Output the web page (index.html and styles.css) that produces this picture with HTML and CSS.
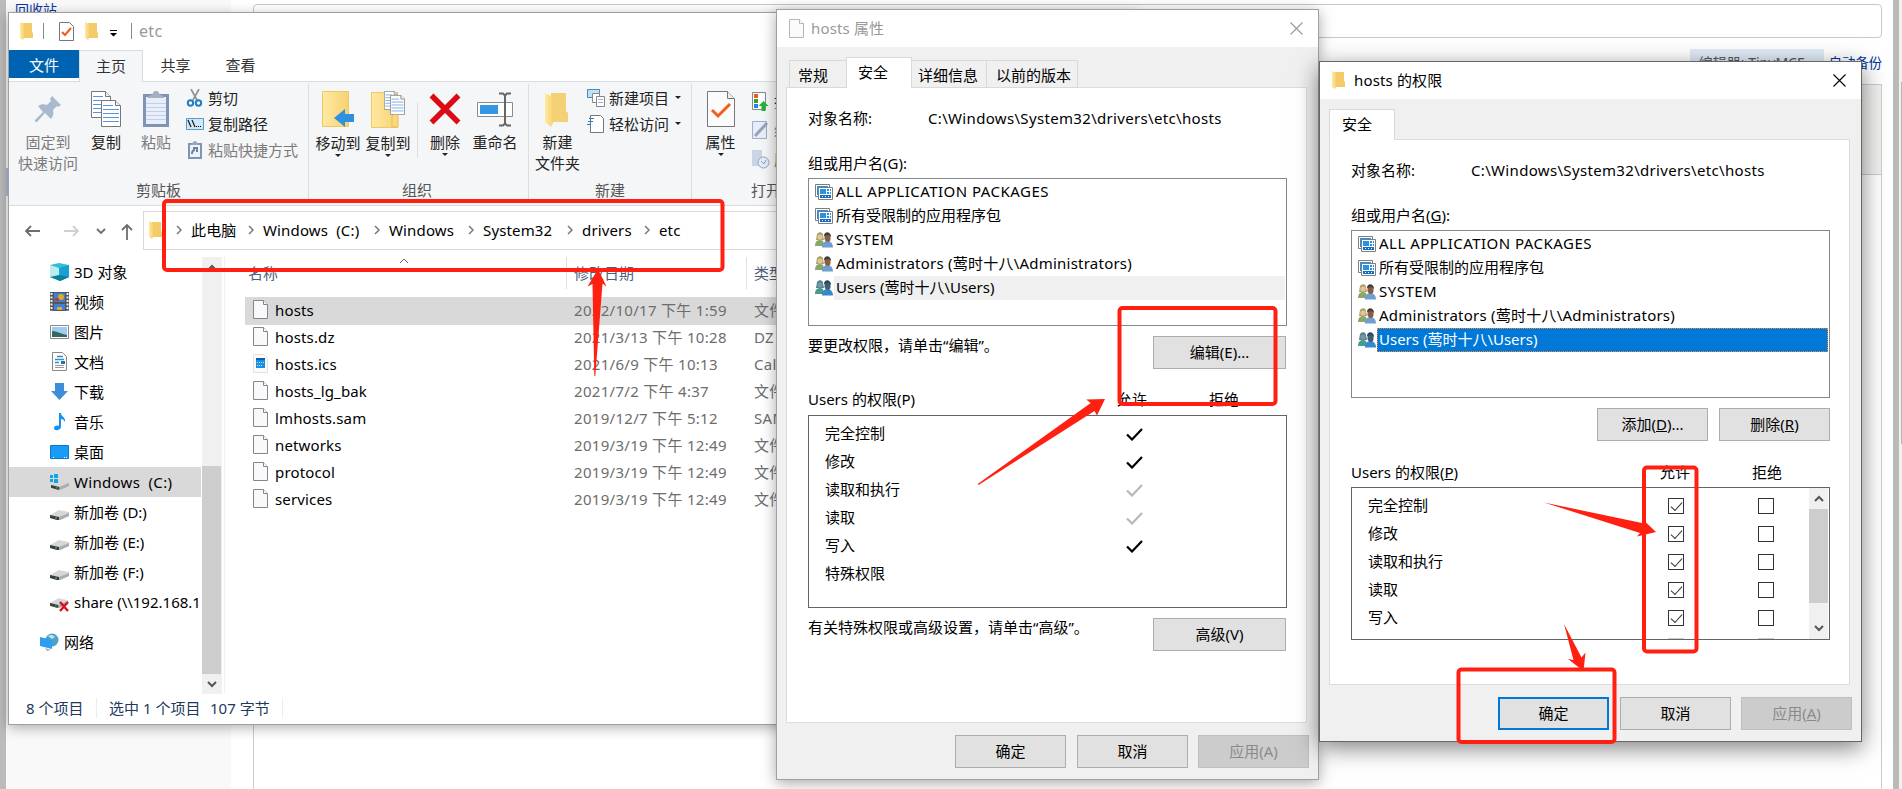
FILE: index.html
```html
<!DOCTYPE html>
<html lang="zh-CN">
<head>
    <meta charset="UTF-8">
    <meta name="viewport" content="width=device-width, initial-scale=1.0">
    <title>hosts 权限</title>
    <link rel="stylesheet" href="styles.css">
</head>
<body>
    <svg class="defs">
        <linearGradient id="gold" x1="0" x2="1"><stop offset="0" stop-color="#ffe9a2"/><stop offset="1" stop-color="#f7d272"/></linearGradient>
        <symbol id="folder" viewBox="0 0 13 18">
            <path d="M3 1h9v9l1 1v5H3z" fill="#f3cb68"/>
            <path d="M0 0l4 2v14l-1 2-3-2z" fill="url(#gold)"/>
        </symbol>
        <symbol id="file" viewBox="0 0 15 19">
            <path d="M.5.5h10l4 4v14H.5z" fill="#f8f9fa" stroke="#868686"/>
            <path d="M10.500.5v4h4" fill="#fff" stroke="#868686"/>
        </symbol>
        <symbol id="apps" viewBox="0 0 18 16">
            <path d="M.5.5h14v12H.5z" fill="#fff" stroke="#7b7f83"/>
            <path d="M2 2h11v9H2z" fill="#2d92dd"/>
            <path d="M3.500 3.500h14v12h-14z" fill="#fff" stroke="#7b7f83"/>
            <path d="M5 5h6v5H5zM12 5h2v2h-2zM15 5h1v2h-1zM12 8h2v2h-2zM15 8h1v2h-1z" fill="#2d92dd"/>
            <path d="M5 11h11v3H5z" fill="#0f6fc6"/>
            <path d="M7 12h1v1H7zM10 12h1v1h-1zM13 12h1v1h-1z" fill="#fff"/>
        </symbol>
        <symbol id="users" viewBox="0 0 18 16">
            <path d="M0 14c0-4 2-6 5-6s4 2 4 6z" fill="#87a866"/>
            <path d="M2 2c2-3 6-2 6 1l1 5H1z" fill="#aaa25e"/>
            <circle cx="5" cy="5" r="2.600" fill="#e3c3a3"/>
            <path d="M7 15.500c0-4 2-6.500 5.500-6.500s5.500 3 5.500 6.500z" fill="#6e9fd2"/>
            <path d="M9.500 3h6v4c0 4-5 4-6 0z" fill="#8b5d42"/>
            <path d="M9 4c0-5 7-5 7 1l-2-2z" fill="#453d38"/>
        </symbol>
        <symbol id="users-sel" viewBox="0 0 18 16">
            <path d="M0 14c0-4 2-6 5-6s4 2 4 6z" fill="#459c8c"/>
            <path d="M2 2c2-3 6-2 6 1l1 5H1z" fill="#567f87"/>
            <circle cx="5" cy="5" r="2.600" fill="#7498a8"/>
            <path d="M7 15.500c0-4 2-6.500 5.500-6.500s5.500 3 5.500 6.500z" fill="#3489cf"/>
            <path d="M9.500 3h6v4c0 4-5 4-6 0z" fill="#3f5d75"/>
            <path d="M9 4c0-5 7-5 7 1l-2-2z" fill="#25496a"/>
        </symbol>
        <symbol id="tick" viewBox="0 0 17 13">
            <path d="M1 6.500l5 5L16 1" fill="none" stroke="currentColor" stroke-width="2.200"/>
        </symbol>
        <symbol id="close" viewBox="0 0 13 13">
            <path d="M.5.5l12 12M12.500.5l-12 12" fill="none" stroke="currentColor" stroke-width="1.100"/>
        </symbol>
        <symbol id="drive" viewBox="0 0 19 10">
            <path d="M0 5L9 0l10 2v4l-9 4H7L0 8z" fill="#d6d7d9"/>
            <path d="M0 5l9 2v3H7L0 8z" fill="#3b3e3d"/>
            <path d="M9 7l10-4v3l-9 4H9z" fill="#aaacae"/>
            <path d="M5 7.500h2v1H5z" fill="#3ad04a"/>
        </symbol>
        <symbol id="chev" viewBox="0 0 6 10">
            <path d="M1 1l4 4-4 4" fill="none" stroke="#777" stroke-width="1.500"/>
        </symbol>
        <symbol id="arrow-up" viewBox="0 0 10 7">
            <path d="M1 6l4-4 4 4" fill="none" stroke="#555" stroke-width="2"/>
        </symbol>
        <symbol id="arrow-down" viewBox="0 0 10 7">
            <path d="M1 1l4 4 4-4" fill="none" stroke="#555" stroke-width="2"/>
        </symbol>
        <symbol id="doc" viewBox="0 0 20 27">
            <path d="M.5.5h14l5 5v21H.5z" fill="#fff" stroke="#777"/>
            <path d="M14.500.5v5h5" fill="#eee" stroke="#777"/>
            <path d="M2 5.500h10M2 9.500h16M2 13.500h16M2 17.500h16M2 21.500h16" stroke="#5a94dc"/>
        </symbol>
    </svg>

    <!-- 网页背景 -->
    <div class="page">
        <div class="side">
            <a class="recycle">回收站</a>
            <div class="side-mark"></div>
        </div>
        <div class="editor">
            <div class="title-input"></div>
            <div class="editor-links">
                <span class="editor-btn">编辑器: TinyMCE ▾</span>
                <a>自动备份</a>
            </div>
            <div class="editor-toolbar"></div>
            <div class="editor-body"></div>
        </div>
        <div class="page-edge"></div>
        <div class="page-scroll"><div></div></div>
    </div>

    <!-- 资源管理器 -->
    <div class="window explorer">
        <div class="ex-title">
            <svg width="13" height="18"><use href="#folder"/></svg>
            <i class="bar"></i>
            <svg class="qa-check" width="15" height="19" viewBox="0 0 15 19"><path d="M.5.5h10l4 4v14H.5z" fill="#fff" stroke="#777"/><path d="M3 10l3 3 6-7" fill="none" stroke="#f1601b" stroke-width="2.200"/></svg>
            <svg class="qa-folder" width="13" height="18"><use href="#folder"/></svg>
            <svg class="qa-more" width="7" height="7" viewBox="0 0 7 7"><path d="M0 0h7v1H0zM0 3h7L3.500 6.500z"/></svg>
            <i class="bar"></i>
            <span>etc</span>
        </div>
        <div class="ex-tabs">
            <div class="ex-file">文件</div>
            <div class="ex-home">主页</div>
            <div class="ex-tab">共享</div>
            <div class="ex-tab">查看</div>
        </div>
        <div class="ribbon">
            <div class="group g-clip">
                <div class="tools">
                    <div class="tool off w60">
                        <svg width="28" height="36" viewBox="0 0 28 36"><path d="M18 5l9 9-3 2-1-1-4 4c1 4 0 6-2 9l-6-6-8 9-2 0v-2l8-8-5-6c3-2 6-2 9-1l4-4-1-2z" fill="#a9b9ce"/></svg>
                        <span>固定到</span><span>快速访问</span>
                    </div>
                    <div class="tool w50 ml3">
                        <svg width="30" height="36" viewBox="0 0 30 36"><use href="#doc" width="20" height="27"/><use href="#doc" x="10" y="9" width="20" height="27"/></svg>
                        <span>复制</span>
                    </div>
                    <div class="tool off w50">
                        <svg width="26" height="36" viewBox="0 0 26 36"><path d="M0 3h26v33H0z" fill="#8193b5"/><path d="M3 6h20v27H3z" fill="#e8eefa"/><path d="M5 7c0-3 4-2 5-5 1-3 5-3 6 0 1 3 5 2 5 5z" fill="#a4afc0"/><path d="M3 12.500h20M3 16.500h20M3 20.500h20M3 24.500h20M3 28.500h20" stroke="#c4d0e8"/></svg>
                        <span>粘贴</span>
                    </div>
                    <div class="small-tools">
                        <div><svg width="18" height="18" viewBox="0 0 18 18"><path d="M5 0l6 11M13 0L7 11" stroke="#8f9296" stroke-width="1.700"/><circle cx="4.500" cy="14" r="2.700" fill="none" stroke="#1f7fc0" stroke-width="2"/><circle cx="12.500" cy="14" r="2.700" fill="none" stroke="#1f7fc0" stroke-width="2"/></svg>剪切</div>
                        <div><svg width="18" height="18" viewBox="0 0 18 18"><path d="M.5 3.500h17v11H.5z" fill="#cfe7f8" stroke="#5a9ac8"/><path d="M2 5l3 7M6 5l3 7" stroke="#222" stroke-width="1.300"/><path d="M10 11h1v1h-1zM12 11h1v1h-1zM14 11h1v1h-1z"/></svg>复制路径</div>
                        <div class="off"><svg width="18" height="19" viewBox="0 0 18 19"><path d="M2 3h14v16H2z" fill="#8193b5"/><path d="M4 5h10v12H4z" fill="#eef2fb"/><path d="M5 5c1-1 2-4 4-4s3 3 4 4z" fill="#99a6bb"/><path d="M6 14c0-3 1-4 3-4M7 8h4v4" fill="none" stroke="#6d7f9f" stroke-width="2"/></svg>粘贴快捷方式</div>
                    </div>
                </div>
                <div class="group-name">剪贴板</div>
            </div>
            <div class="group g-org">
                <div class="tools">
                    <div class="tool w50">
                        <svg width="32" height="37" viewBox="0 0 32 37"><path d="M.5.5h26v35H.5z" fill="url(#gold)" stroke="#edc964"/><path d="M32 23H23v-5l-11 9 11 9v-5h9z" fill="#2f90e0"/></svg>
                        <span>移动到</span><i class="caret"></i>
                    </div>
                    <div class="tool w50">
                        <svg width="34" height="37" viewBox="0 0 34 37"><path d="M.5 1.500h26v35H.5z" fill="url(#gold)" stroke="#edc964"/><use href="#doc" x="13" width="14" height="19"/><use href="#doc" x="19" y="4" width="15" height="20"/><path d="M21 36V25c2-2 5-2 6 0v11z" fill="#f8d880" stroke="#e8bd50"/></svg>
                        <span>复制到</span><i class="caret"></i>
                    </div>
                    <i class="divider"></i>
                    <div class="tool w50">
                        <svg width="32" height="36" viewBox="0 0 32 36"><path d="M2.500 4.500l27 27M29.500 4.500l-27 27" stroke="#dc0a14" stroke-width="5.500"/></svg>
                        <span>删除</span><i class="caret"></i>
                    </div>
                    <div class="tool w50">
                        <svg width="36" height="36" viewBox="0 0 36 36"><path d="M.5 11.500h35v14H.5z" fill="#fff" stroke="#8b8b8b"/><path d="M3 14h18v9H3z" fill="#3497e6"/><path d="M22 2.500h4l2 2 2-2h4M28 4v29M22 34.500h4l2-2 2 2h4" fill="none" stroke="#666" stroke-width="2"/></svg>
                        <span>重命名</span>
                    </div>
                </div>
                <div class="group-name">组织</div>
            </div>
            <div class="group g-new">
                <div class="tools">
                    <div class="tool w56">
                        <svg width="25" height="36" viewBox="0 0 25 36"><path d="M6 2h15v18l2 2v9H6z" fill="#f5d175"/><path d="M0 2l8 4v26l-2 4-6-5z" fill="url(#gold)"/></svg>
                        <span>新建</span><span>文件夹</span>
                    </div>
                    <div class="small-tools near">
                        <div><svg width="18" height="18" viewBox="0 0 18 18"><path d="M.5.5h12v8H.5z" fill="#bfe2f2" stroke="#4a8bb0"/><path d="M5.500 4.500h7v9h-7z" fill="#fff" stroke="#888"/><path d="M9.500 7.500h8v10h-8z" fill="#fff" stroke="#888"/><path d="M11 10.500h5M11 13.500h5" stroke="#8fb4e0"/></svg>新建项目<i class="caret"></i></div>
                        <div><svg width="18" height="18" viewBox="0 0 18 18"><path d="M3.500.5h10l3 3v14h-13z" fill="#fff" stroke="#777"/><path d="M2 3.500h5M1 6.500h5M0 9.500h4" stroke="#2a7ac4"/></svg>轻松访问<i class="caret"></i></div>
                    </div>
                </div>
                <div class="group-name">新建</div>
            </div>
            <div class="group g-open">
                <div class="tools">
                    <div class="tool w56">
                        <svg width="28" height="36" viewBox="0 0 28 36"><path d="M.5.5h20l7 7v28H.5z" fill="#fbfbfb" stroke="#777"/><path d="M20.500.5v7h7" fill="#eee" stroke="#777"/><path d="M5 19l6 6 12-12" fill="none" stroke="#f1601b" stroke-width="3"/></svg>
                        <span>属性</span><i class="caret"></i>
                    </div>
                    <div class="small-tools spaced">
                        <div><svg width="18" height="19" viewBox="0 0 18 19"><path d="M.5.5h13v17H.5z" fill="#fff" stroke="#888"/><path d="M2 2h4v4H2z" fill="#f05a1a"/><path d="M2 7h4v4H2z" fill="#2ba52b"/><path d="M2 12h4v4H2z" fill="#2d80dd"/><path d="M11.500 9l5 5h-3v5h-4v-5h-3z" fill="#1fb53a"/></svg>打开</div>
                        <div class="off"><svg width="18" height="19" viewBox="0 0 18 19"><path d="M.5.500h14v17H.5z" fill="#e8eef8" stroke="#a0aec6"/><path d="M3 15L15 2" stroke="#93a3c0" stroke-width="3"/></svg>编辑</div>
                        <div class="off"><svg width="18" height="19" viewBox="0 0 18 19"><path d="M0 0h10v16H0z" fill="#c9d5e7"/><circle cx="11.500" cy="12.500" r="5.500" fill="#e5ecf6" stroke="#93a3c0"/><path d="M9 11l3 3 2-4" fill="none" stroke="#93a3c0"/></svg>历史</div>
                    </div>
                </div>
                <div class="group-name">打开</div>
            </div>
        </div>
        <div class="address-row">
            <svg class="nav-icons" width="120" height="20" viewBox="0 0 120 20" fill="none" stroke="#6e6e6e" stroke-width="1.800">
                <path d="M17 10H3M8 5l-5 5 5 5"/>
                <path d="M41 10h14M50 5l5 5-5 5" stroke="#d0d0d0"/>
                <path d="M74 8l4 4 4-4"/>
                <path d="M104 19V4M99 9l5-5 5 5"/>
            </svg>
            <div class="address">
                <svg width="13" height="18"><use href="#folder"/></svg>
                <svg class="c1" width="6" height="10"><use href="#chev"/></svg><span class="w-pc">此电脑</span>
                <svg width="6" height="10"><use href="#chev"/></svg><span class="w-c">Windows&nbsp; (C:)</span>
                <svg width="6" height="10"><use href="#chev"/></svg><span class="w-win">Windows</span>
                <svg width="6" height="10"><use href="#chev"/></svg><span class="w-sys">System32</span>
                <svg width="6" height="10"><use href="#chev"/></svg><span class="w-drv">drivers</span>
                <svg width="6" height="10"><use href="#chev"/></svg><span>etc</span>
            </div>
        </div>
        <div class="ex-main">
            <div class="tree">
                <div><svg width="19" height="18" viewBox="0 0 19 18"><path d="M0 2l9-2 10 2v12l-9 4-10-4z" fill="#36bcd8"/><path d="M0 2l9 3v9l-9 0z" fill="#b9ecf0"/><path d="M9 5l10-3v12l-9 4z" fill="#16a0d4"/><path d="M0 14l9-2 10 2-9 4z" fill="#0c7f9c"/></svg>3D 对象</div>
                <div><svg width="19" height="19" viewBox="0 0 19 19"><path d="M0 0h19v19H0z" fill="#555"/><path d="M4 1h11v9H4zM4 12h11v6H4z" fill="#3c7fe0"/><path d="M1.500 1v18M17.500 1v18" stroke="#eee" stroke-width="2" stroke-dasharray="2 1.500"/><circle cx="11" cy="5" r="3" fill="#d8b020"/><path d="M5 6h4v3H5z" fill="#c0392b"/><path d="M7 15h5v3H7z" fill="#d8b020"/></svg>视频</div>
                <div><svg width="19" height="14" viewBox="0 0 19 14"><path d="M.5.5h18v13H.5z" fill="#fff" stroke="#888"/><path d="M2 2h15v10H2z" fill="#9dcdf2"/><path d="M2 6c5 0 9 3 15 4v2H2z" fill="#35685a"/></svg>图片</div>
                <div><svg width="19" height="19" viewBox="0 0 19 19"><path d="M2.500.5h10l4 4v14h-14z" fill="#fff" stroke="#888"/><path d="M7 4.500h6M5 7.500h9M5 10.500h4" stroke="#2e8fd0" stroke-width="1.300"/><path d="M11 9h4v3h-4z" fill="#2e6da0"/><path d="M5 13.500h9M5 15.500h9" stroke="#999"/></svg>文档</div>
                <div><svg width="19" height="18" viewBox="0 0 19 18"><path d="M5 0h9v8h4l-8.500 9L1 8h4z" fill="#3c8edb"/></svg>下载</div>
                <div><svg width="19" height="18" viewBox="0 0 19 18"><path d="M9 0h2c0 4 5 4 4 9-1-2-2-3-4-3v8c0 3-7 5-7 1 0-2 3-3 5-2z" fill="#1193f0"/></svg>音乐</div>
                <div><svg width="19" height="14" viewBox="0 0 19 14"><path d="M.5.5h18v13H.5z" fill="#1a9bf7" stroke="#0b79c9"/><path d="M3 12.500h1M14 12.500h1M16 12.500h1" stroke="#fff"/></svg>桌面</div>
                <div class="selected"><svg width="19" height="16" viewBox="0 0 19 16"><use href="#drive" x="1" y="6" width="18" height="10"/><path d="M0 1h3v3H0zM4 0h4v4H4zM0 5h3v3H0zM4 5h4v4H4z" fill="#0aa8e8"/></svg>Windows&nbsp; (C:)</div>
                <div><svg class="drv" width="19" height="10"><use href="#drive"/></svg>新加卷 (D:)</div>
                <div><svg class="drv" width="19" height="10"><use href="#drive"/></svg>新加卷 (E:)</div>
                <div><svg class="drv" width="19" height="10"><use href="#drive"/></svg>新加卷 (F:)</div>
                <div><svg class="drv" width="19" height="14" viewBox="0 0 19 14"><use href="#drive" width="18" height="10"/><path d="M10 4l8 9M18 4l-8 9" stroke="#d8101c" stroke-width="2.400"/></svg>share (\\192.168.1</div>
                <div class="network"><svg width="19" height="18" viewBox="0 0 19 18"><circle cx="12" cy="7" r="6.500" fill="#4fa0c8"/><path d="M8 3c3-2 5-1 7 1l-3 2z" fill="#bfe3f0"/><path d="M0 4l12 3v9L0 13z" fill="#2d9df0"/><path d="M5 15l6 2-4 1z" fill="#aaa"/></svg>网络</div>
            </div>
            <div class="scroll tree-scroll">
                <svg width="10" height="7"><use href="#arrow-up"/></svg>
                <div class="thumb"></div>
                <svg width="10" height="7"><use href="#arrow-down"/></svg>
            </div>
            <div class="files">
                <svg class="sort" width="10" height="6" viewBox="0 0 10 6"><path d="M1 5l4-4 4 4" fill="none" stroke="#666"/></svg>
                <div class="file-head"><span>名称</span><span>修改日期</span><span>类型</span></div>
                <div class="file selected"><svg width="15" height="19"><use href="#file"/></svg><span>hosts</span><span>2022/10/17 下午 1:59</span><span>文件</span></div>
                <div class="file"><svg width="15" height="19"><use href="#file"/></svg><span>hosts.dz</span><span>2021/3/13 下午 10:28</span><span>DZ 文件</span></div>
                <div class="file"><svg width="15" height="19" viewBox="0 0 15 19"><path d="M.5.5h10l4 4v14H.5z" fill="#fafafa" stroke="#e2e2e2"/><path d="M3 4h9v10H3z" fill="#1b8fe0"/><path d="M3 4h9v2H3z" fill="#0b62a8"/><path d="M4 8.500h7M4 11.500h5" stroke="#bfe0fa" stroke-dasharray="1 1"/></svg><span>hosts.ics</span><span>2021/6/9 下午 10:13</span><span>Calendar</span></div>
                <div class="file"><svg width="15" height="19"><use href="#file"/></svg><span>hosts_lg_bak</span><span>2021/7/2 下午 4:37</span><span>文件</span></div>
                <div class="file"><svg width="15" height="19"><use href="#file"/></svg><span>lmhosts.sam</span><span>2019/12/7 下午 5:12</span><span>SAM 文件</span></div>
                <div class="file"><svg width="15" height="19"><use href="#file"/></svg><span>networks</span><span>2019/3/19 下午 12:49</span><span>文件</span></div>
                <div class="file"><svg width="15" height="19"><use href="#file"/></svg><span>protocol</span><span>2019/3/19 下午 12:49</span><span>文件</span></div>
                <div class="file"><svg width="15" height="19"><use href="#file"/></svg><span>services</span><span>2019/3/19 下午 12:49</span><span>文件</span></div>
            </div>
        </div>
        <div class="status">
            <span class="st1">8 个项目</span>
            <span class="st2">选中 1 个项目</span>
            <span class="st3">107 字节</span>
        </div>
    </div>

    <!-- hosts 属性 -->
    <div class="window dialog props">
        <div class="dlg-title"><svg width="15" height="19"><use href="#file"/></svg><span>hosts 属性</span><svg class="x" width="13" height="13"><use href="#close"/></svg></div>
        <div class="dlg-tabs">
            <div class="dtab t1">常规</div>
            <div class="dtab on">安全</div>
            <div class="dtab t3">详细信息</div>
            <div class="dtab t4">以前的版本</div>
        </div>
        <div class="panel">
            <div class="object"><span>对象名称:</span><span>C:\Windows\System32\drivers\etc\hosts</span></div>
            <div class="label">组或用户名(G):</div>
            <div class="listbox">
                <div class="li caps"><svg width="18" height="16"><use href="#apps"/></svg><span>ALL APPLICATION PACKAGES</span></div>
                <div class="li"><svg width="18" height="16"><use href="#apps"/></svg><span>所有受限制的应用程序包</span></div>
                <div class="li caps"><svg width="18" height="16"><use href="#users"/></svg><span>SYSTEM</span></div>
                <div class="li latin"><svg width="18" height="16"><use href="#users"/></svg><span>Administrators (莺时十八\Administrators)</span></div>
                <div class="li gray"><svg width="18" height="16"><use href="#users-sel"/></svg><span>Users (莺时十八\Users)</span></div>
            </div>
            <div class="hint"><span>要更改权限，请单击<q>编辑</q>。</span><button class="btn wide">编辑(E)...</button></div>
            <div class="perm-head"><span>Users 的权限(P)</span><span>允许</span><span>拒绝</span></div>
            <div class="perms">
                <div><span>完全控制</span><svg width="17" height="13"><use href="#tick"/></svg></div>
                <div><span>修改</span><svg width="17" height="13"><use href="#tick"/></svg></div>
                <div><span>读取和执行</span><svg class="dim" width="17" height="13"><use href="#tick"/></svg></div>
                <div><span>读取</span><svg class="dim" width="17" height="13"><use href="#tick"/></svg></div>
                <div><span>写入</span><svg width="17" height="13"><use href="#tick"/></svg></div>
                <div><span>特殊权限</span></div>
            </div>
            <div class="hint"><span>有关特殊权限或高级设置，请单击<q>高级</q>。</span><button class="btn wide">高级(V)</button></div>
        </div>
        <div class="dlg-foot">
            <button class="btn">确定</button>
            <button class="btn">取消</button>
            <button class="btn disabled">应用(A)</button>
        </div>
    </div>

    <!-- hosts 的权限 -->
    <div class="window dialog rights">
        <div class="dlg-title"><svg width="13" height="18"><use href="#folder"/></svg><span>hosts 的权限</span><svg class="x" width="13" height="13"><use href="#close"/></svg></div>
        <div class="dlg-tabs">
            <div class="dtab on">安全</div>
        </div>
        <div class="panel">
            <div class="object"><span>对象名称:</span><span>C:\Windows\System32\drivers\etc\hosts</span></div>
            <div class="label">组或用户名(<u>G</u>):</div>
            <div class="listbox">
                <div class="li caps"><svg width="18" height="16"><use href="#apps"/></svg><span>ALL APPLICATION PACKAGES</span></div>
                <div class="li"><svg width="18" height="16"><use href="#apps"/></svg><span>所有受限制的应用程序包</span></div>
                <div class="li caps"><svg width="18" height="16"><use href="#users"/></svg><span>SYSTEM</span></div>
                <div class="li latin"><svg width="18" height="16"><use href="#users"/></svg><span>Administrators (莺时十八\Administrators)</span></div>
                <div class="li blue"><svg width="18" height="16"><use href="#users-sel"/></svg><span>Users (莺时十八\Users)</span></div>
            </div>
            <div class="list-btns"><button class="btn">添加(<u>D</u>)...</button><button class="btn">删除(<u>R</u>)</button></div>
            <div class="perm-head"><span>Users 的权限(<u>P</u>)</span><span>允许</span><span>拒绝</span></div>
            <div class="perm-box">
                <div class="checks">
                    <div><span>完全控制</span><i class="cb on"></i><i class="cb"></i></div>
                    <div><span>修改</span><i class="cb on"></i><i class="cb"></i></div>
                    <div><span>读取和执行</span><i class="cb on"></i><i class="cb"></i></div>
                    <div><span>读取</span><i class="cb on"></i><i class="cb"></i></div>
                    <div><span>写入</span><i class="cb on"></i><i class="cb"></i></div>
                    <div><span></span><i class="cb dim"></i><i class="cb dim"></i></div>
                </div>
                <div class="scroll">
                    <svg width="10" height="7"><use href="#arrow-up"/></svg>
                    <div class="thumb"></div>
                    <svg width="10" height="7"><use href="#arrow-down"/></svg>
                </div>
            </div>
        </div>
        <div class="dlg-foot">
            <button class="btn primary">确定</button>
            <button class="btn">取消</button>
            <button class="btn disabled">应用(<u>A</u>)</button>
        </div>
    </div>

    <!-- 红色标注 -->
    <svg class="marks" width="1902" height="789" viewBox="0 0 1902 789">
        <g fill="none" stroke="#ff2012" stroke-width="4">
            <rect x="164" y="201" width="558.500" height="69" rx="3"/>
            <rect x="1119.500" y="308" width="156" height="96" rx="3"/>
            <rect x="1644" y="467.500" width="52.500" height="184" rx="3"/>
            <rect x="1458.500" y="669.500" width="156" height="72.500" rx="3"/>
        </g>
        <g fill="#ff2012">
            <path d="M598 269l8.500 17.500-4-3-7.200 92.500h-1l-1.800-92-5 2.500z"/>
            <path d="M1105 399l-8 16.500-2.500-4.500-116 74-.8-1 113-81-4.500-3.500z"/>
            <path d="M1544 502.500l98 20.500.3-4 13.700 13-19 4.500 3-3.500z"/>
            <path d="M1564 624l17.500 33.500 4-5-2 18.500-15.500-12 5.500 1z"/>
        </g>
    </svg>
</body>
</html>
```
FILE: styles.css
```css
* {
    box-sizing: border-box;
}
body {
    margin: 0;
    height: 789px;
    overflow: hidden;
    position: relative;
    background: #fff;
    font: 15px/20px "Noto Sans", "Noto Sans CJK SC", sans-serif;
    color: #000;
}
svg {
    display: block;
    flex: none;
}
.defs {
    position: absolute;
    width: 0;
    height: 0;
}

/* 网页背景 */
.page {
    display: flex;
    height: 789px;
    border-left: 6px solid #bbb;
}
.side {
    width: 225px;
    background: #f9f9f9;
}
.recycle {
    display: block;
    padding-left: 9px;
    font-size: 14px;
    color: #0b35a0;
}
.side-mark {
    width: 3px;
    height: 28px;
    margin-top: 148px;
    background: #a9bbdc;
}
.editor {
    display: flex;
    flex-direction: column;
    width: 1629px;
    margin: 4px 11px 0 22px;
}
.title-input {
    height: 34px;
    border: 1px solid #c8c8c8;
    border-radius: 4px;
}
.editor-links {
    display: flex;
    justify-content: flex-end;
    height: 46px;
    padding-top: 11px;
    font-size: 13.3px;
    color: #003399;
    white-space: nowrap;
}
.editor-links a {
    margin: 4px 0 0 5px;
}
.editor-btn {
    width: 134px;
    height: 30px;
    padding: 4px 0 0 9px;
    background: #e0ebf7;
    font-size: 14px;
    color: #555;
}
.editor-toolbar {
    height: 91px;
    background: #f0f0ee;
    border: 1px solid #ccc;
}
.editor-body {
    flex: 1;
    border: 1px solid #ccc;
    border-width: 0 1px;
}
.page-edge {
    width: 6px;
    background: #bababa;
}
.page-scroll {
    width: 3px;
    padding: 82px 0 0 2px;
    background: #f1f1f1;
}
.page-scroll div {
    height: 362px;
    background: #b8b8b8;
}

.window {
    position: absolute;
    display: flex;
    flex-direction: column;
    background: #fff;
    border: 1px solid #a0a0a0;
}

/* 资源管理器 */
.explorer {
    left: 8px;
    top: 12px;
    width: 1130px;
    height: 713px;
    box-shadow: 0 3px 12px rgba(0, 0, 0, .3);
}
.ex-title {
    display: flex;
    align-items: center;
    height: 37px;
    padding-left: 11px;
    font-size: 16px;
    letter-spacing: .3px;
    color: #999;
}
.ex-title .bar {
    width: 1px;
    height: 16px;
    margin-left: 10px;
    background: #888;
}
.ex-title .qa-check {
    margin-left: 15px;
}
.ex-title .qa-folder {
    margin-left: 11px;
}
.ex-title .qa-more {
    margin: 4px 6px 0 12px;
}
.ex-title span {
    margin-left: 7px;
}
.ex-title .qa-more + .bar {
    margin-left: 8px;
}
.ex-tabs {
    display: flex;
    height: 32px;
    border-bottom: 1px solid #dadbdc;
    text-align: center;
    line-height: 30px;
    color: #333;
}
.ex-file {
    width: 70px;
    height: 28px;
    background: #0063b1;
    color: #fff;
}
.ex-home {
    width: 64px;
    height: 32px;
    background: #f5f6f7;
    border: 1px solid #dadbdc;
    border-bottom: 0;
}
.ex-tab {
    width: 65px;
}
.ribbon {
    display: flex;
    height: 124px;
    background: #f5f6f7;
    border-bottom: 1px solid #dadbdc;
    color: #222;
    white-space: nowrap;
}
.group {
    display: flex;
    flex: none;
    flex-direction: column;
    height: 116px;
    margin-top: 2px;
    border-right: 1px solid #dcdddf;
}
.g-clip { width: 300px; padding-left: 9px; }
.g-org { width: 220px; padding-left: 4px; }
.g-new { width: 163px; }
.g-open { width: 160px; }
.tools {
    display: flex;
    height: 100px;
    padding-top: 7px;
}
.tool {
    display: flex;
    flex: none;
    flex-direction: column;
    align-items: center;
    line-height: 21px;
}
.tool svg {
    margin-bottom: 5px;
}
.off {
    color: #7b7b7b;
}
.w60 { width: 60px; }
.w50 { width: 50px; }
.w56 { width: 57px; }
.ml3 { margin-left: 3px; }
.caret {
    border: 3px solid transparent;
    border-top-color: #222;
    border-bottom: 0;
}
.divider {
    width: 1px;
    height: 55px;
    margin: 12px 2px 0 4px;
    background: #dcdddf;
}
.small-tools {
    margin: -6px 0 0 5px;
}
.small-tools.near {
    margin-left: 1px;
}
.small-tools div {
    display: flex;
    align-items: center;
    gap: 4px;
    height: 26px;
}
.small-tools .caret {
    margin-left: 2px;
}
.small-tools.spaced {
    margin: -4px 0 0 3px;
}
.small-tools.spaced div {
    height: 29px;
}
.group-name {
    text-align: center;
    color: #555;
}
.g-clip .group-name {
    margin-left: -9px;
}
.g-org .group-name {
    margin-left: -7px;
}
.g-open .group-name {
    padding-left: 59px;
    text-align: left;
}
.address-row {
    display: flex;
    height: 51px;
    padding-top: 5px;
}
.nav-icons {
    margin: 10px 0 0 14px;
}
.address {
    display: flex;
    align-items: center;
    flex: 1;
    height: 39px;
    padding-left: 5px;
    border: 1px solid #d9d9d9;
    white-space: nowrap;
}
.address span {
    margin: -1px 0 0 9px;
    letter-spacing: .15px;
}
.address .c1 {
    margin-left: 14px;
}
.w-pc { width: 57px; }
.w-c { width: 111px; }
.w-win { width: 79px; }
.w-sys { width: 84px; }
.w-drv { width: 62px; }
.ex-main {
    display: flex;
    height: 438px;
}
.tree {
    width: 192px;
    overflow: hidden;
    white-space: nowrap;
}
.tree div {
    display: flex;
    align-items: center;
    gap: 5px;
    height: 30px;
    padding-left: 41px;
}
.tree .selected {
    background: #d9d9d9;
    letter-spacing: .3px;
}
.tree .drv {
    margin-top: 6px;
}
.tree .network {
    margin-top: 10px;
    padding-left: 31px;
}
.scroll {
    display: flex;
    flex-direction: column;
    align-items: center;
    background: #f0f0f0;
}
.thumb {
    width: 100%;
    background: #cdcdcd;
}
.tree-scroll {
    width: 20px;
    margin-left: 1px;
    padding-top: 7px;
}
.tree-scroll .thumb {
    width: 19px;
    height: 208px;
    margin: 195px 1px 7px 0;
}
.files {
    flex: 1;
    margin-left: 2px;
    padding-left: 20px;
    border-left: 1px solid #f0f0f0;
}
.sort {
    margin: 0 0 -6px 154px;
    position: relative;
    top: 1px;
}
.file-head {
    display: flex;
    height: 32px;
    margin-bottom: 8px;
    line-height: 32px;
    color: #4c607a;
}
.file-head span {
    width: 180px;
    padding-left: 7px;
    border-left: 1px solid #e0e0e0;
}
.file-head span:first-child {
    width: 321px;
    padding-left: 3px;
    border: 0;
}
.file {
    display: flex;
    align-items: center;
    height: 27px;
    padding: 0 0 2px 8px;
    letter-spacing: .3px;
    color: #6d6d6d;
}
.file.selected {
    height: 28px;
    background: #d9d9d9;
}
.file svg {
    margin-top: -1px;
}
.file span {
    width: 180px;
}
.file span:nth-of-type(1) {
    width: 299px;
    margin-left: 7px;
    letter-spacing: .15px;
    color: #000;
}
.status {
    display: flex;
    align-items: center;
    height: 30px;
    padding: 0 0 2px 17px;
    color: #1e395b;
}
.st1 {
    width: 71px;
    border-right: 1px solid #eee;
}
.st2 {
    width: 101px;
    margin-left: 12px;
}
.st3 {
    width: 73px;
    border-right: 1px solid #eee;
}

/* 对话框 */
.dialog {
    width: 543px;
    background: #f0f0f0;
}
.props {
    left: 776px;
    top: 9px;
    height: 771px;
    box-shadow: 0 3px 14px rgba(0, 0, 0, .35);
}
.rights {
    left: 1319px;
    top: 61px;
    height: 681px;
    border-color: #666;
    box-shadow: 0 6px 22px rgba(0, 0, 0, .5);
}
.dlg-title {
    display: flex;
    align-items: center;
    height: 37px;
    padding: 0 15px 1px 12px;
    background: #fff;
}
.dlg-title span {
    flex: 1;
    margin: -1px 0 0 7px;
    letter-spacing: .15px;
}
.props .dlg-title {
    color: #999;
}
.props .dlg-title svg:first-child {
    opacity: .6;
}
.rights .dlg-title span {
    margin-left: 9px;
}
.dlg-tabs {
    display: flex;
    align-items: flex-end;
    height: 41px;
    margin: 0 0 -1px 9px;
    position: relative;
}
.props .dlg-tabs {
    padding-left: 3px;
}
.dtab {
    height: 28px;
    padding-left: 8px;
    line-height: 29px;
    border: 1px solid #d9d9d9;
}
.dtab.on {
    width: 66px;
    height: 31px;
    padding-left: 11px;
    background: #fff;
    border-bottom: 0;
}
.rights .dtab.on {
    padding-left: 12px;
}
.t1 { width: 57px; border-right: 0; }
.t3 { width: 75px; border-left: 0; padding-left: 6px; }
.t4 { width: 91px; border-left: 0; padding-left: 9px; }
.panel {
    width: 521px;
    height: 636px;
    margin-left: 9px;
    padding: 20px 20px 0 21px;
    background: #fff;
    border: 1px solid #dcdcdc;
}
.rights .panel {
    height: 546px;
}
.object {
    display: flex;
}
.object span:first-child {
    width: 120px;
}
.object span:last-child {
    letter-spacing: .33px;
}
.label {
    margin: 25px 0 5px;
}
.listbox {
    width: 479px;
    height: 148px;
    padding: 1px;
    border: 1px solid #828790;
}
.rights .listbox {
    height: 168px;
}
.li {
    display: flex;
    align-items: center;
    height: 24px;
    padding-left: 5px;
}
.li svg {
    margin: -1px 1px 0 0;
}
.li span {
    flex: 1;
    height: 24px;
    padding-left: 2px;
    line-height: 22px;
}
.caps {
    letter-spacing: .48px;
}
.latin {
    letter-spacing: .23px;
}
.li.gray span {
    background: #f0f0f0;
}
.li.blue span {
    padding-left: 1px;
    line-height: 20px;
    background: #0078d7;
    border: 1px dotted #ff8728;
    color: #fff;
}
.hint {
    display: flex;
    justify-content: space-between;
    align-items: flex-start;
    width: 478px;
    padding-top: 10px;
}
.hint span {
    margin-top: -1px;
}
q {
    quotes: "“" "”";
}
.btn {
    width: 111px;
    height: 33px;
    padding: 0 0 2px;
    background: #e1e1e1;
    border: 1px solid #adadad;
    font: inherit;
    color: #000;
}
.btn.wide {
    width: 133px;
}
.btn.primary {
    border: 2px solid #0078d7;
}
.btn.disabled {
    background: #ccc;
    border-color: #bfbfbf;
    color: #8a8a8a;
}
.perm-head {
    display: flex;
    margin: 20px 0 6px;
}
.perm-head span:nth-child(1) { width: 309px; }
.perm-head span:nth-child(2) { width: 92px; }
.perms {
    width: 479px;
    height: 193px;
    padding: 4px 0 0 16px;
    border: 1px solid #646464;
}
.perms div {
    display: flex;
    align-items: center;
    height: 28px;
}
.perms span {
    width: 301px;
    margin-top: -2px;
}
.dim {
    color: #b8b8b8;
}
.dlg-foot {
    display: flex;
    justify-content: flex-end;
    gap: 11px;
    padding: 12px 9px 0 0;
}
.dlg-foot .disabled {
    margin-left: -1px;
}
.list-btns {
    display: flex;
    justify-content: flex-end;
    gap: 11px;
    width: 479px;
    padding-top: 10px;
}
.rights .perm-head {
    margin: 21px 0 5px;
}
.perm-box {
    display: flex;
    width: 479px;
    height: 153px;
    border: 1px solid #646464;
}
.checks {
    flex: 1;
    height: 151px;
    padding: 4px 0 0 16px;
    overflow: hidden;
}
.checks div {
    display: flex;
    align-items: center;
    height: 28px;
}
.checks span {
    flex: none;
    width: 300px;
    margin-top: -2px;
}
.cb {
    flex: none;
    width: 16px;
    height: 16px;
    margin-right: 74px;
    border: 1px solid #333;
    background: #fff;
}
.cb.on::after {
    content: '';
    display: block;
    width: 10px;
    height: 5px;
    margin: 3px 0 0 2px;
    border: solid #333;
    border-width: 0 0 1.5px 1.5px;
    transform: rotate(-48deg);
}
.cb.dim {
    border-color: #ccc;
}
.perm-box .scroll {
    width: 19px;
    flex: none;
    margin-right: 1px;
    padding-top: 7px;
}
.perm-box .thumb {
    height: 94px;
    margin: 7px 0 22px;
}

.marks {
    position: absolute;
    left: 0;
    top: 0;
}
```
